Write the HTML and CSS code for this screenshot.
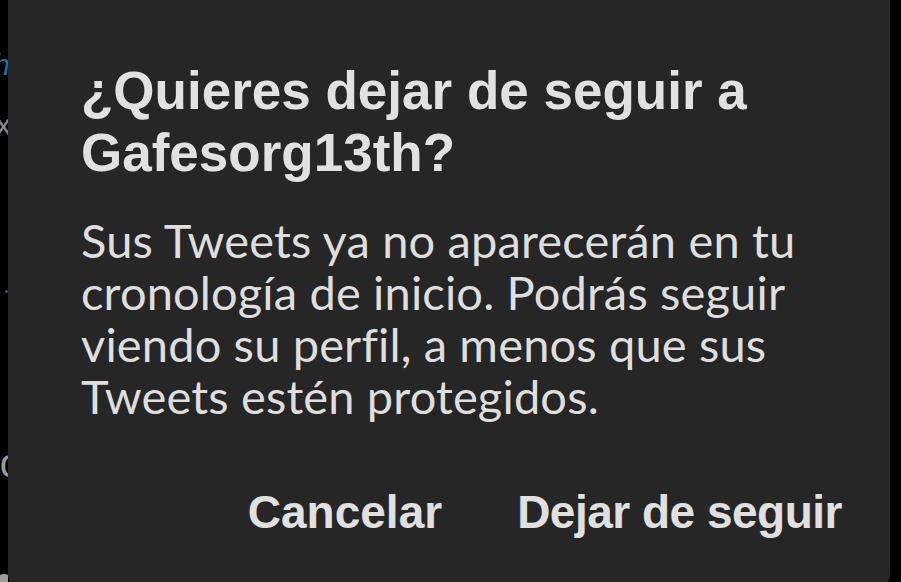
FILE: index.html
```html
<!DOCTYPE html>
<html lang="es">
<head>
  <meta charset="UTF-8">
  <meta name="viewport" content="width=device-width, initial-scale=1.0">
  <title>Dejar de seguir</title>
  <link rel="stylesheet" href="styles.css">
</head>
<body>

<div class="screen">
  <!-- timeline peeking out behind the modal -->
  <div class="backdrop">
    <span class="peek peek-link">h</span>
    <span class="peek peek-x">x</span>
    <span class="peek peek-dot"></span>
    <span class="peek peek-o">o</span>
    <span class="peek peek-avatar"></span>
  </div>

  <div class="dialog" role="dialog">
    <h1 class="dialog-title">¿Quieres dejar de seguir a Gafesorg13th?</h1>
    <p class="dialog-text">Sus Tweets ya no aparecerán en tu cronología de inicio. Podrás seguir viendo su perfil, a menos que sus Tweets estén protegidos.</p>
    <div class="dialog-actions">
      <button class="btn btn-cancel">Cancelar</button>
      <button class="btn btn-unfollow">Dejar de seguir</button>
    </div>
  </div>
</div>

</body>
</html>
```

FILE: styles.css
```css
/* Reset */
* {
  margin: 0;
  padding: 0;
  box-sizing: border-box;
}

body {
  background: #000;
  height: 100vh;
  overflow: hidden;
}

.screen {
  display: flex;
  height: 100%;
}

/* Strip of the page behind the modal */
.backdrop {
  width: 8px;
  flex-shrink: 0;
  overflow: hidden;
  display: flex;
  flex-direction: column;
  align-items: flex-end;
  font-family: "Liberation Sans", sans-serif;
}

.peek {
  display: block;
  line-height: 1;
}

.peek-link {
  margin-top: 50px;
  font-size: 30px;
  font-style: italic;
  color: #1d6fa8;
  margin-right: -2px;
}

.peek-x {
  margin-top: 30px;
  font-size: 30px;
  color: #8a8a8a;
  margin-right: -3px;
}

.peek-dot {
  margin-top: 150px;
  width: 3px;
  height: 3px;
  border-radius: 50%;
  background: #3b5878;
}

.peek-o {
  margin-top: 150px;
  font-size: 40px;
  color: #9a9a9a;
  margin-right: -14px;
}

.peek-avatar {
  margin-top: auto;
  width: 16px;
  height: 8px;
  border-radius: 8px 8px 0 0;
  background: #9c9c9c;
  margin-right: -4px;
}

/* Modal */
.dialog {
  width: 882px;
  height: 590px;
  background: #262626;
  border-radius: 0 0 16px 16px;
  padding: 60px 48px 0 73px;
  color: #e0e0e0;
}

.dialog-title {
  font-family: "Liberation Sans", Arial, sans-serif;
  font-size: 53px;
  line-height: 62px;
  font-weight: 700;
  color: #e1e1e1;
  max-width: 720px;
}

.dialog-text {
  margin-top: 30px;
  font-family: Lato, "Noto Sans", sans-serif;
  font-size: 47px;
  line-height: 52px;
  font-weight: 400;
  letter-spacing: 0.15px;
  color: #dedede;
  max-width: 770px;
}

.dialog-actions {
  margin-top: 62px;
  display: flex;
  justify-content: flex-end;
  gap: 75px;
}

.btn {
  background: none;
  border: none;
  font-family: "Liberation Sans", Arial, sans-serif;
  font-size: 46px;
  line-height: 56px;
  font-weight: 700;
  color: #e0e0e0;
  cursor: pointer;
}

.btn-cancel {
  margin-left: 3px;
}

.btn-unfollow {
  letter-spacing: -0.5px;
}
```
